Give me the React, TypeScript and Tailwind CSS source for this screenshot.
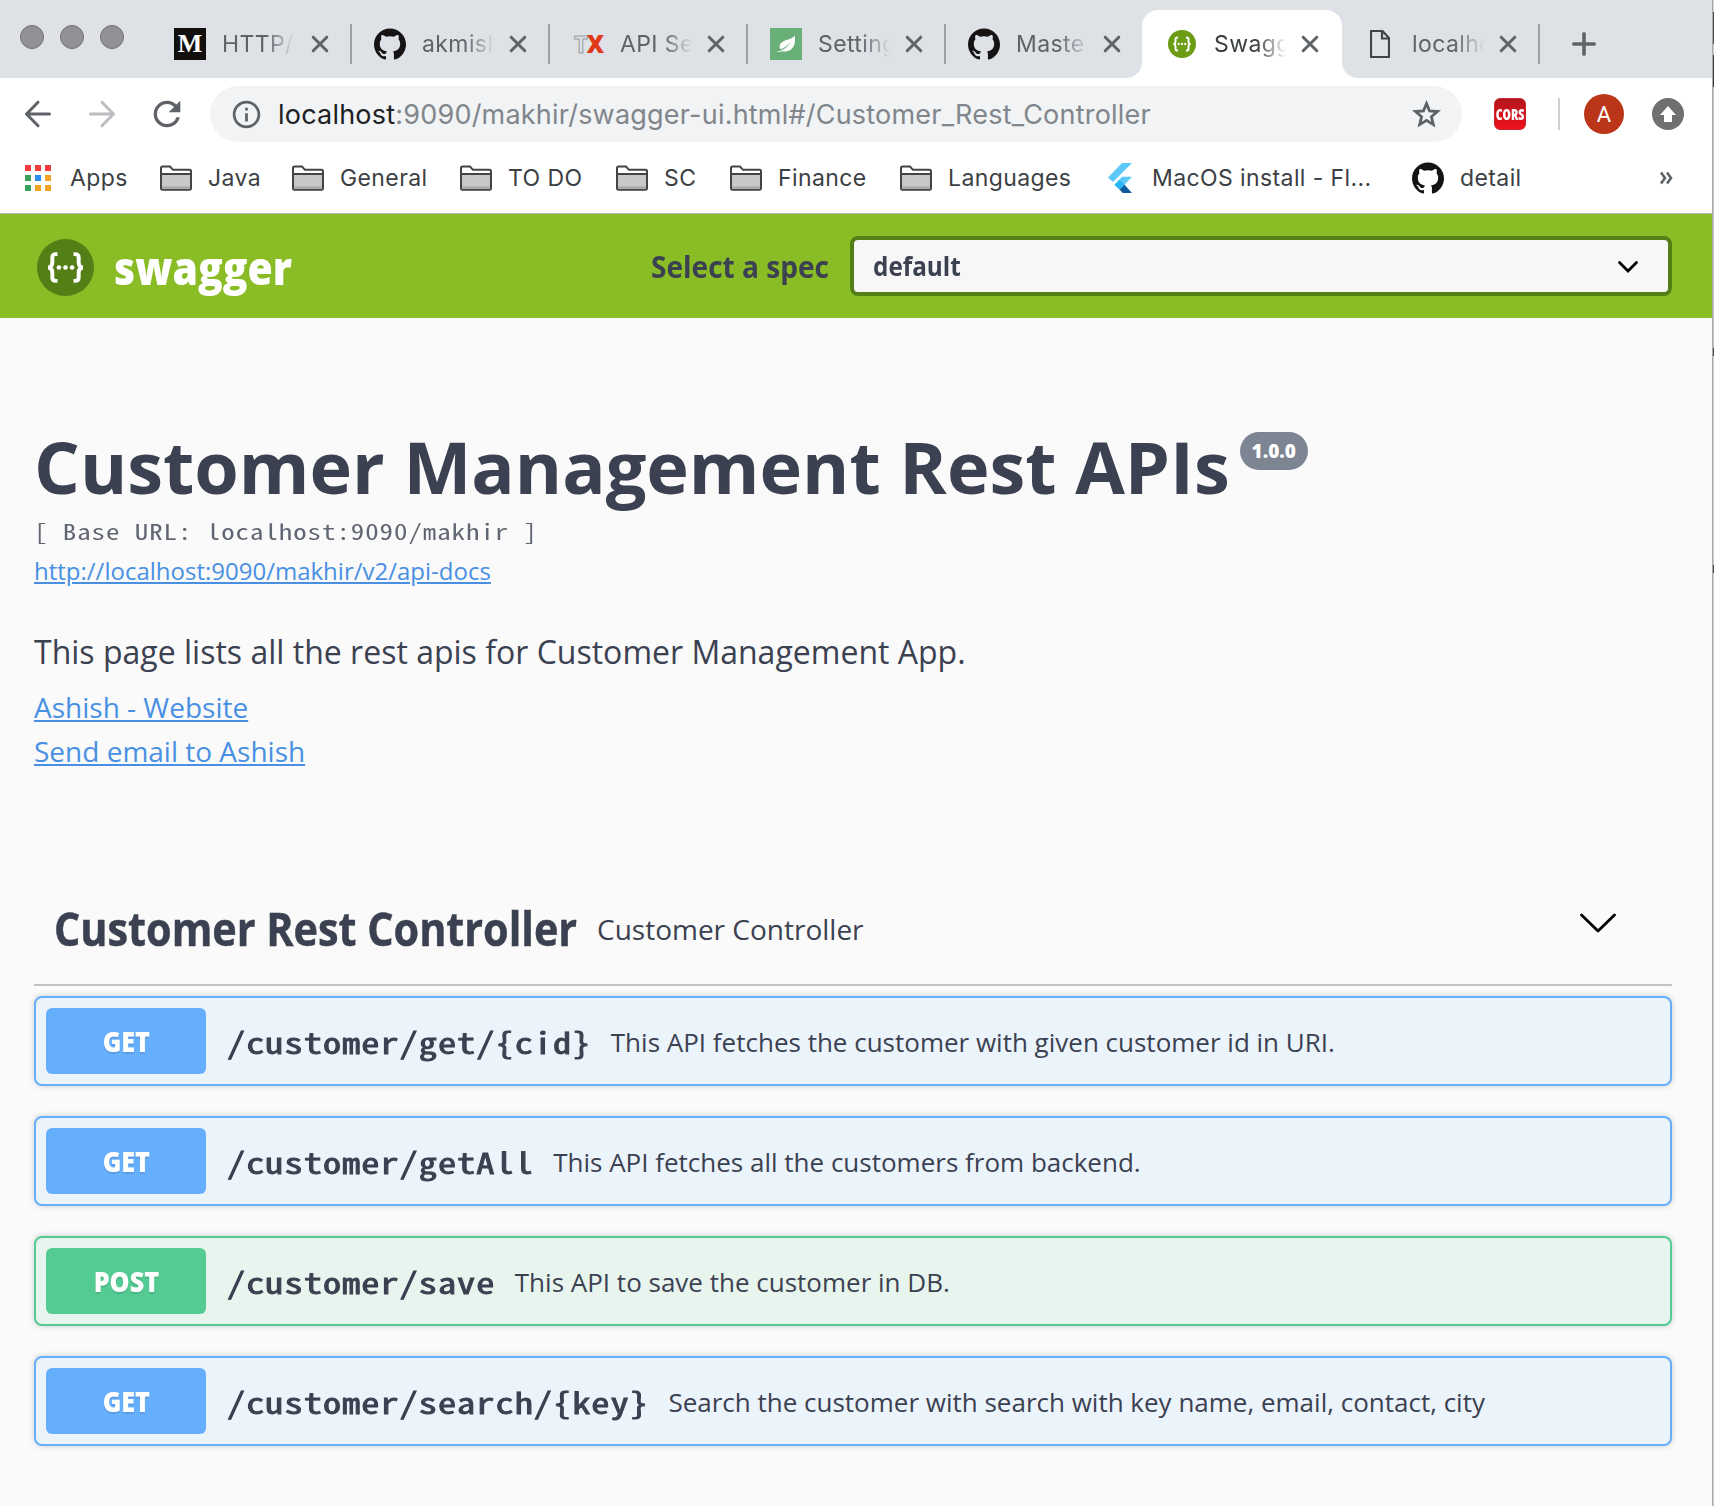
import type { ReactNode } from "react";
import { SiGithub } from "react-icons/si";
import { MdInfoOutline, MdRefresh } from "react-icons/md";

const SWAGGER_BRACES =
  "M11.5 8.5H10.6C9.2 8.5 8.6 9.2 8.6 10.4V13.2C8.6 14.8 8 15.7 6.4 16C8 16.3 8.6 17.2 8.6 18.8V21.6C8.6 22.8 9.2 23.5 10.6 23.5H11.5 M20.5 8.5H21.4C22.8 8.5 23.4 9.2 23.4 10.4V13.2C23.4 14.8 24 15.7 25.6 16C24 16.3 23.4 17.2 23.4 18.8V21.6C23.4 22.8 22.8 23.5 21.4 23.5H20.5";

function SwaggerMark({ className, fill }: { className: string; fill: string }) {
  return (
    <svg viewBox="0 0 32 32" className={className}>
      <circle cx="16" cy="16" r="16" fill={fill} />
      <path d={SWAGGER_BRACES} fill="none" stroke="#fff" strokeWidth="2.2" />
      <circle cx="12.3" cy="16" r="1.3" fill="#fff" />
      <circle cx="16" cy="16" r="1.3" fill="#fff" />
      <circle cx="19.7" cy="16" r="1.3" fill="#fff" />
    </svg>
  );
}

function FolderIcon() {
  return (
    <svg viewBox="0 0 32 26" className="h-[26px] w-8">
      <path d="M1 23.5V3Q1 1.5 2.5 1.5H10L13 4.8H29.5Q31 4.8 31 6.3V23.5Q31 24.8 29.5 24.8H2.5Q1 24.8 1 23.5Z" fill="#fff" stroke="#444" strokeWidth="2" />
      <path d="M2 9H30V23.8H2Z" fill="#c8c8c8" />
      <path d="M2 21.5H30V23.8H2Z" fill="#a8a8a8" />
      <path d="M1 9H31" stroke="#444" strokeWidth="2" />
    </svg>
  );
}

function FlutterIcon() {
  return (
    <svg viewBox="0 0 24 30" className="h-[30px] w-6">
      <path d="M14 0H24L5 19L0 14.5Z" fill="#5bc8f8" />
      <path d="M14 13.8H24L16.5 21.7L11.5 26.6L6.5 21.7Z" fill="#5bc8f8" />
      <path d="M11.5 26.6L16.5 21.7L24 30H14.8Z" fill="#0f5a9c" />
      <path d="M6.5 21.7L11.5 16.8L16.5 21.7L11.5 26.6Z" fill="#29b6f6" />
    </svg>
  );
}

function LeafIcon() {
  return (
    <svg viewBox="0 0 20 18" className="h-[18px] w-5">
      <path d="M18.7 0.5C17.5 3 14 4 10 5.2C5.5 6.5 3.2 9 3.8 12.5C3.9 13.2 4.1 13.8 4.4 14.3C8 13.2 12 10.5 14.8 6.5C12.6 11 8.8 14 4.6 15.8C3.4 16.3 2 16.5 0.8 16.3C1 17 2.2 17.4 4 16.8C5 16.5 5.8 16.2 6.4 16.2C13.5 17.6 18 13 18.8 7.5C19.2 5 19.1 2.3 18.7 0.5Z" fill="#fff" />
    </svg>
  );
}

function PageIcon() {
  return (
    <svg viewBox="0 0 20 28" className="h-7 w-5">
      <path d="M1 1H12.5L19 8V27H1Z M12 1V8.5H19" fill="none" stroke="#444" strokeWidth="2.2" />
    </svg>
  );
}

function CloseIcon() {
  return (
    <svg viewBox="0 0 18 18" className="h-[18px] w-[18px]">
      <path d="M2.2 2.2L15.8 15.8M15.8 2.2L2.2 15.8" stroke="#5f6368" strokeWidth="3" strokeLinecap="round" />
    </svg>
  );
}

function ArrowIcon({ className }: { className: string }) {
  return (
    <svg viewBox="0 0 28 28" className={className} fill="none" stroke="currentColor" strokeWidth="3" strokeLinecap="round" strokeLinejoin="round">
      <path d="M2.5 14H25.5M14 2.2L2.5 14L14 25.8" />
    </svg>
  );
}

function StarIcon() {
  return (
    <svg viewBox="0 0 29 29" className="mr-[21px] h-[29px] w-[29px]">
      <path
        d="M14.5 3.6L17.5 10.9L25.5 11.5L19.4 16.7L21.3 24.6L14.5 20.4L7.7 24.6L9.6 16.7L3.5 11.5L11.5 10.9Z"
        fill="none"
        stroke="#5f6368"
        strokeWidth="2.8"
      />
    </svg>
  );
}

type TabData = { title: string; icon: ReactNode; active?: boolean; divider?: boolean; nudge?: boolean };

const GithubIcon = () => <SiGithub className="h-8 w-8 text-[#161314]" />;

const tabs: TabData[] = [
  {
    title: "HTTP/",
    divider: true,
    nudge: true,
    icon: (
      <span className="flex h-8 w-8 items-center justify-center bg-[#12100e] font-['Liberation_Serif',serif] text-[26px] leading-none font-bold text-white">
        M
      </span>
    ),
  },
  { title: "akmish", divider: true, icon: <GithubIcon /> },
  {
    title: "API Se",
    divider: true,
    icon: (
      <span className="ml-0.5 flex font-['Open_Sans',sans-serif] text-[24px] leading-none font-bold">
        <span className="text-[#dee1e6] [-webkit-text-stroke:1px_#9a9da3]">T</span>
        <span className="-ml-px font-extrabold text-[#e0391a]">X</span>
      </span>
    ),
  },
  {
    title: "Setting",
    divider: true,
    icon: (
      <span className="flex h-8 w-8 items-center justify-center bg-[#68b078]">
        <LeafIcon />
      </span>
    ),
  },
  { title: "Maste", icon: <GithubIcon /> },
  { title: "Swagg", active: true, icon: <SwaggerMark className="h-7 w-7" fill="#6c9b14" /> },
  { title: "localho", divider: true, icon: <PageIcon /> },
];

function Tab({ tab }: { tab: TabData }) {
  return (
    <div
      className={
        "relative flex h-[68px] items-center " + (tab.active ? "-mx-px w-[200px] rounded-t-2xl bg-white pl-px" : "w-[198px]")
      }
    >
      {tab.active && (
        <>
          <svg viewBox="0 0 16 16" className="absolute bottom-0 -left-4 h-4 w-4">
            <path d="M16 0V16H0A16 16 0 0 0 16 0Z" fill="#fff" />
          </svg>
          <svg viewBox="0 0 16 16" className="absolute -right-4 bottom-0 h-4 w-4">
            <path d="M0 0V16H16A16 16 0 0 1 0 0Z" fill="#fff" />
          </svg>
        </>
      )}
      <div className={"flex w-8 shrink-0 items-center justify-center " + (tab.nudge ? "ml-[21px]" : "ml-[23px]")}>{tab.icon}</div>
      <div
        className={
          "ml-4 w-[74px] shrink-0 text-[23px] leading-8 tracking-[0.4px] whitespace-nowrap [mask-image:linear-gradient(to_right,#000_58%,transparent_98%)] " +
          (tab.active ? "text-[#3c4043]" : "text-[#5f6368]")
        }
      >
        {tab.title}
      </div>
      <div className={tab.nudge ? "ml-[15px]" : "ml-[13px]"}>
        <CloseIcon />
      </div>
      {tab.divider && <div className="absolute right-[-1px] h-10 w-0.5 bg-[#9da1a6]" />}
    </div>
  );
}

const bookmarks: { label: string; width: string; icon: ReactNode }[] = [
  { label: "Java", width: "w-[132px]", icon: <FolderIcon /> },
  { label: "General", width: "w-[168px]", icon: <FolderIcon /> },
  { label: "TO DO", width: "w-[156px]", icon: <FolderIcon /> },
  { label: "SC", width: "w-[114px]", icon: <FolderIcon /> },
  { label: "Finance", width: "w-[170px]", icon: <FolderIcon /> },
  { label: "Languages", width: "w-[204px]", icon: <FolderIcon /> },
  { label: "MacOS install - Fl...", width: "w-[308px]", icon: <FlutterIcon /> },
  { label: "detail", width: "w-[200px]", icon: <GithubIcon /> },
];

const appDots = [
  "bg-[#f43b3b]", "bg-[#f43b3b]", "bg-[#f43b3b]",
  "bg-[#3aa05c]", "bg-[#2b8cf0]", "bg-[#f2a323]",
  "bg-[#3aa05c]", "bg-[#f2a323]", "bg-[#f2a323]",
];

function BrowserChrome() {
  return (
    <div className="font-['Inter',sans-serif]">
      <div className="flex h-[78px] bg-[#dee1e6]">
        <div className="flex w-[153px] shrink-0 gap-4 pt-[25px] pl-5">
          {[0, 1, 2].map((i) => (
            <div key={i} className="h-6 w-6 rounded-full border border-[#737277] bg-[#929196]" />
          ))}
        </div>
        <div className="flex pt-2.5">
          {tabs.map((tab) => (
            <Tab key={tab.title} tab={tab} />
          ))}
        </div>
        <svg viewBox="0 0 24 24" className="mt-8 ml-[33px] h-6 w-6">
          <path d="M12 1.8V22.2M1.8 12H22.2" stroke="#5f6368" strokeWidth="3.6" strokeLinecap="round" />
        </svg>
      </div>

      <div className="flex h-[72px] items-center bg-white">
        <ArrowIcon className="ml-6 h-7 w-7 text-[#5f6368]" />
        <ArrowIcon className="ml-9 h-7 w-7 rotate-180 text-[#bcbec1]" />
        <MdRefresh className="ml-[31px] h-10 w-10 text-[#5f6368]" />
        <div className="ml-[23px] flex h-14 w-[1252px] shrink-0 items-center rounded-full bg-[#f1f3f4]">
          <MdInfoOutline className="ml-5 h-[33px] w-[33px] text-[#5f6368]" />
          <div className="ml-[15px] flex-1 pt-px text-[27px] leading-10 tracking-[0.21px] whitespace-nowrap text-[#80868b]">
            <span className="text-[#202124]">localhost</span>:9090/makhir/swagger-ui.html#/Customer_Rest_Controller
          </div>
          <StarIcon />
        </div>
        <div className="ml-8 flex h-8 w-8 items-center justify-center rounded-md border border-[#c4282c] bg-linear-to-b from-[#b3161d] to-[#f0101c] font-['Open_Sans',sans-serif] text-[16px] leading-none font-extrabold text-white">
          <span className="scale-x-[0.84] [font-stretch:75%]">CORS</span>
        </div>
        <div className="ml-8 h-8 w-0.5 bg-[#cfcfcf]" />
        <div className="ml-6 flex h-10 w-10 items-center justify-center rounded-full bg-[#bb3619] pt-0.5 font-['Roboto',sans-serif] text-[22px] leading-none text-white">
          A
        </div>
        <svg viewBox="0 0 32 32" className="ml-7 h-8 w-8">
          <circle cx="16" cy="16" r="16" fill="#707070" />
          <path d="M16 8L24 17H20V24H12V17H8Z" fill="#fff" />
        </svg>
      </div>

      <div className="flex h-[64px] items-center border-b border-[#b6b4b6] bg-white pb-2 text-[23px] leading-8 tracking-[0.4px] whitespace-nowrap text-[#3c4043]">
        <div className="ml-[25px] flex w-[135px] shrink-0 items-center">
          <div className="grid grid-cols-3 gap-1">
            {appDots.map((c, i) => (
              <div key={i} className={"h-1.5 w-1.5 " + c} />
            ))}
          </div>
          <span className="ml-[19px]">Apps</span>
        </div>
        {bookmarks.map((b) => (
          <div key={b.label} className={"flex shrink-0 items-center " + b.width}>
            <div className="flex w-8 shrink-0 justify-center">{b.icon}</div>
            <span className="ml-4">{b.label}</span>
          </div>
        ))}
        <svg viewBox="0 0 14 14" className="ml-[47px] h-3.5 w-3.5">
          <path d="M2 1.5L6 7L2 12.5M8 1.5L12 7L8 12.5" fill="none" stroke="#5f6368" strokeWidth="2.6" />
        </svg>
      </div>
    </div>
  );
}

type Operation = { method: "GET" | "POST"; path: string; summary: string };

const operations: Operation[] = [
  { method: "GET", path: "/customer/get/{cid}", summary: "This API fetches the customer with given customer id in URI." },
  { method: "GET", path: "/customer/getAll", summary: "This API fetches all the customers from backend." },
  { method: "POST", path: "/customer/save", summary: "This API to save the customer in DB." },
  { method: "GET", path: "/customer/search/{key}", summary: "Search the customer with search with key name, email, contact, city" },
];

function OperationRow({ op }: { op: Operation }) {
  const get = op.method === "GET";
  return (
    <div
      className={
        "flex h-[90px] items-center rounded-lg border-2 pl-2.5 shadow-[0_0_6px_rgba(0,0,0,0.19)] " +
        (get ? "border-[#65affc] bg-[#ebf3fb]" : "border-[#53cb92] bg-[#e8f5ee]")
      }
    >
      <div
        className={
          "flex h-[66px] w-40 shrink-0 items-center justify-center rounded-md text-[28px] leading-none font-extrabold text-white [text-shadow:0_2px_0_rgba(0,0,0,0.1)] " +
          (get ? "bg-[#65affc]" : "bg-[#53cb92]")
        }
      >
        <span className="scale-x-[0.9]">{op.method}</span>
      </div>
      <div className="ml-5 shrink-0" style={{ width: op.path.length * 19.2 }}>
        <span className="ml-px block w-max origin-left scale-x-125 font-['Noto_Sans_Mono_CJK_SC',monospace] text-[29px] leading-[44px] font-normal tracking-[0.84px] whitespace-nowrap [-webkit-text-stroke:0.9px_#3b4151]">
          {op.path}
        </span>
      </div>
      <div className="ml-5 pt-px text-[26px] leading-10 whitespace-nowrap">{op.summary}</div>
    </div>
  );
}

/* Slivers of the windows behind the browser, top to bottom. */
const backdrop = [
  "h-3 bg-[#d4d4d4]", "h-8 bg-[#48494b]", "h-[11px] bg-[#c9c9c9]", "h-8 bg-[#3c3d3f]",
  "h-[261px] bg-[#c4c4c4]", "h-2 bg-[#444]", "h-[209px] bg-[#cdcdcd]", "h-2 bg-[#444]", "flex-1 bg-[#cdcdcd]",
];

export default function App() {
  return (
    <div className="flex h-[1506px] w-[1714px] overflow-hidden">
      <div className="w-[1712px] shrink-0 bg-[#fafafa] font-['Open_Sans',sans-serif] text-[#3b4151]">
        <BrowserChrome />

        <header className="flex h-[104px] items-center bg-[#8abc26] pr-10 pl-[37px]">
          <SwaggerMark className="mt-0.5 h-[57px] w-[57px]" fill="#547f17" />
          <div className="ml-5 w-[180px]">
            <span className="block w-max origin-left scale-x-[0.89] pt-0.5 text-[46px] leading-none font-extrabold text-white">swagger</span>
          </div>
          <div className="ml-auto w-[179px]">
            <span className="block w-max origin-left scale-x-[0.905] text-[31px] leading-none font-bold whitespace-nowrap">Select a spec</span>
          </div>
          <div className="ml-5 flex h-[60px] w-[822px] shrink-0 items-center justify-between rounded-lg border-4 border-[#547f17] bg-[#f7f7f7] pr-[29px] pl-[19px]">
            <span className="origin-left scale-x-[0.9] pb-0.5 text-[27px] leading-none font-bold">default</span>
            <svg viewBox="0 0 22 14" className="mt-0.5 h-3.5 w-[22px]">
              <path d="M2.5 2.5L11 11L19.5 2.5" fill="none" stroke="#000" strokeWidth="2.8" strokeLinecap="round" />
            </svg>
          </div>
        </header>

        <main className="pt-[108px] pr-10 pl-[34px]">
          <div className="flex items-start">
            <h1 className="text-[72px] leading-[80px] font-bold whitespace-nowrap">Customer Management Rest APIs</h1>
            <span className="mt-1.5 ml-2.5 flex h-[38px] w-[68px] items-center justify-center rounded-full bg-[#7d8492] text-[19px] leading-none font-extrabold text-white">
              1.0.0
            </span>
          </div>
          <div className="mt-[13px] h-6 w-[504px]">
            <span className="block w-max origin-left scale-x-125 font-['Noto_Sans_Mono_CJK_SC',monospace] text-[21.5px] leading-6 font-light tracking-[0.77px] whitespace-nowrap text-[#3b4151]/80">
              [ Base URL: localhost:9090/makhir ]
            </span>
          </div>
          <a className="mt-3 block w-max text-[24px] leading-8 text-[#4990e2] underline">http://localhost:9090/makhir/v2/api-docs</a>
          <p className="mt-[43px] text-[32px] leading-[44px] tracking-[0.01px]">This page lists all the rest apis for Customer Management App.</p>
          <a className="mt-[11px] block w-max text-[28px] leading-[44px] text-[#4990e2] underline">Ashish - Website</a>
          <a className="block w-max text-[28px] leading-[44px] text-[#4990e2] underline">Send email to Ashish</a>

          <section className="mt-[100px]">
            <div className="flex h-[113px] items-center border-b-2 border-[#c1c3c8] pl-5">
              <div className="w-[523px] shrink-0 pb-px">
                <h2 className="w-max origin-left scale-x-[0.899] text-[46px] leading-none font-bold whitespace-nowrap [-webkit-text-stroke:0.5px_#3b4151]">
                  Customer Rest Controller
                </h2>
              </div>
              <span className="ml-5 text-[28px] leading-none">Customer Controller</span>
              <svg viewBox="0 0 36 20" className="mt-10 mr-14 ml-auto h-5 w-9 self-start">
                <path d="M1.5 2L18 18L34.5 2" fill="none" stroke="#000" strokeWidth="2.8" strokeLinecap="round" strokeLinejoin="round" />
              </svg>
            </div>
            <div className="mt-2.5 flex flex-col gap-[30px]">
              {operations.map((op) => (
                <OperationRow key={op.path} op={op} />
              ))}
            </div>
          </section>
        </main>
      </div>
      <div className="flex w-0.5 flex-col border-l border-[#a9a9a9]">
        {backdrop.map((c, i) => (
          <div key={i} className={"w-full " + c} />
        ))}
      </div>
    </div>
  );
}
